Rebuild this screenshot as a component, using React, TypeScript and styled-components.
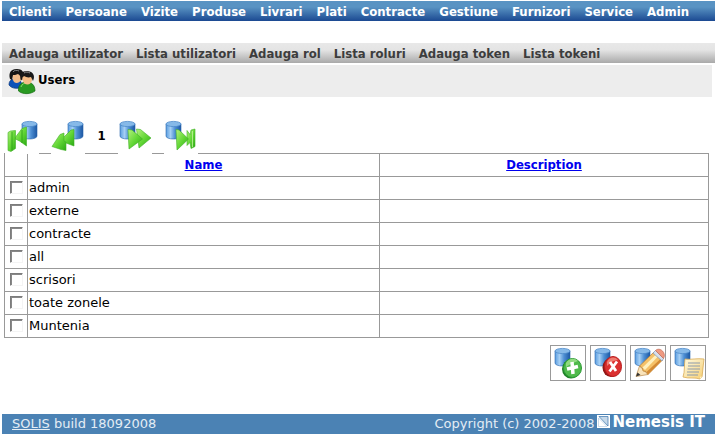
import React from 'react';
import styled, { createGlobalStyle, css } from 'styled-components';

const boldFace = css`
  font-family: "DejaVu Sans Condensed", "DejaVu Sans", Verdana, sans-serif;
  font-size: 13px;
  font-weight: bold;
`;

const GlobalStyle = createGlobalStyle`
  * { box-sizing: border-box; }
  body {
    margin: 1px 1px 2px 2px;
    background: #fff;
    color: #000;
    font: 13px/20px "DejaVu Sans", Verdana, sans-serif;
  }
`;

const MenuBar = styled.nav<{ $tone: 'blue' | 'grey' }>`
  ${boldFace}
  display: flex;
  height: 20px;
  padding: 0 7px;
  overflow: hidden;
  white-space: nowrap;
  ${({ $tone }) =>
    $tone === 'blue'
      ? css`
          gap: 14px;
          color: #fff;
          background: linear-gradient(#5993c3 0%, #5993c3 30%, #1b4992 100%);
        `
      : css`
          gap: 13px;
          margin-top: 22px;
          color: #3d3d3d;
          background: linear-gradient(#e8e8e8 0%, #e4e4e4 35%, #a9a9a9 100%);
        `}
`;

const MenuLink = styled.a`
  color: inherit;
  text-decoration: none;
  line-height: 22px;
`;

const TitleBar = styled.header`
  display: flex;
  align-items: center;
  gap: 2px;
  height: 32px;
  margin: 2px 3px 0 0;
  padding-left: 6px;
  background: #ededed;
`;

const Title = styled.h1`
  ${boldFace}
  margin: 0;
  padding-bottom: 2px;
`;

const Pager = styled.div`
  position: relative;
  display: flex;
  align-items: center;
  gap: 12px;
  margin: 23px 0 -1px 3px;
`;

const IconButton = styled.button`
  padding: 0;
  border: 0;
  background: #fff;
  cursor: pointer;
  svg { display: block; }
`;

const PageNumber = styled.span`
  ${boldFace}
  width: 9px;
  padding-bottom: 2px;
  text-align: center;
`;

const Content = styled.main`
  margin: 0 6px 0 2px;
`;

const Table = styled.table`
  width: 100%;
  border-collapse: collapse;
  table-layout: fixed;
`;

const SelectColumn = styled.col`
  width: 23px;
`;

const NameColumn = styled.col`
  width: 50%;
`;

const Cell = styled.td`
  height: 23px;
  padding: 1px;
  border: 1px solid #999;
  line-height: 20px;
`;

const HeadCell = styled(Cell).attrs({ as: 'th' })`
  ${boldFace}
  text-align: center;
`;

const SortLink = styled.a`
  color: #00e;
  text-decoration: underline;
`;

const Tick = styled.input`
  display: block;
  appearance: none;
  width: 13px;
  height: 13px;
  margin: 0 0 2px 4px;
  border: 1px solid;
  border-color: #7c7c7c #f4f4f4 #f4f4f4 #7c7c7c;
  background: #fff;
  box-shadow: inset 1px 1px #888;
`;

const Actions = styled.div`
  display: flex;
  justify-content: flex-end;
  gap: 4px;
  margin: 7px 3px 0 0;
`;

const ActionButton = styled(IconButton)`
  border: 1px solid #999;
`;

const Footer = styled.footer`
  display: flex;
  justify-content: space-between;
  height: 20px;
  margin-top: 33px;
  padding: 0 10px;
  background: #4b82b4;
  color: #e4edf5;
`;

const FooterLink = styled.a`
  color: inherit;
`;

const Copyright = styled.div`
  display: flex;
  gap: 3px;
`;

const Brand = styled.a`
  display: flex;
  gap: 2px;
  color: #fff;
  font-size: 15px;
  line-height: 16px;
  font-weight: bold;
  text-decoration: none;
`;

function Gradients({ id }: { id: string }) {
  return (
    <defs>
      <linearGradient id={`${id}-blue`}>
        <stop offset="0" stopColor="#5a9de0" />
        <stop offset=".3" stopColor="#a5cff4" />
        <stop offset=".6" stopColor="#4d8fd4" />
        <stop offset="1" stopColor="#1c57a3" />
      </linearGradient>
      <linearGradient id={`${id}-green`} x2="1" y2="1">
        <stop offset="0" stopColor="#b4f07e" />
        <stop offset=".5" stopColor="#66d838" />
        <stop offset="1" stopColor="#2aaa12" />
      </linearGradient>
      <linearGradient id={`${id}-paper`} x2="1" y2="1">
        <stop offset="0" stopColor="#fffbe2" />
        <stop offset="1" stopColor="#f6cf74" />
      </linearGradient>
    </defs>
  );
}

function Cylinder({ id, x, y }: { id: string; x: number; y: number }) {
  return (
    <g transform={`translate(${x} ${y})`}>
      <path d="M0 3v12c0 4 15 4 15 0V3z" fill={`url(#${id}-blue)`} stroke="#2865ab" strokeWidth=".6" />
      <ellipse cx="7.5" cy="3" rx="7.5" ry="2.6" fill="#86b9e8" stroke="#4f8ccb" strokeWidth=".8" />
    </g>
  );
}

type Step = 'first' | 'previous' | 'next' | 'last';

const arrows: Record<Step, string[]> = {
  first: ['M9.500 18.500 17 8.500l4.500-1.500v19l-7-5z', 'M3 12.500 5.500 11l5-.5v18L6 31.500 3 30.500z'],
  previous: ['M10 20 20 10l3-.5V26l-8-3z', 'M1 26.500 9 14.500l4-1.500v8l2 1v8.500l-5-1z'],
  next: ['M18.500 9l4 .5L33 18 21 28z', 'M10 9.500l4 .5L24.500 19 11 29z'],
  last: ['M23 10.500l3 4 1-4.500 4-1v17.500l-4 2-1-6-3 3z', 'M12 9.500l3 .5L24.500 19 13 30z'],
};

function PagerIcon({ step }: { step: Step }) {
  const back = step === 'first' || step === 'previous';
  return (
    <svg width="34" height="34" viewBox="0 0 34 34" aria-hidden="true">
      <Gradients id={step} />
      <Cylinder id={step} x={back ? 17 : 2} y={1} />
      {arrows[step].map((d) => (
        <path key={d} d={d} fill={`url(#${step}-green)`} stroke="#3fb026" strokeWidth=".6" strokeLinejoin="round" />
      ))}
      {step === 'first' && <path d="M7 12v18.500M17 10v13" stroke="#2a9c14" strokeWidth=".8" />}
      {step === 'last' && <path d="M28.500 11v16" stroke="#c3f3a0" strokeWidth=".8" />}
    </svg>
  );
}

type Action = 'add' | 'remove' | 'edit' | 'view';

function ActionIcon({ action }: { action: Action }) {
  return (
    <svg width="34" height="34" viewBox="0 0 34 34" aria-hidden="true">
      <Gradients id={action} />
      <Cylinder id={action} x={4} y={2} />
      {action === 'add' && (
        <>
          <ellipse cx="20" cy="23" rx="9" ry="9.500" fill="#1d7f25" />
          <ellipse cx="21.500" cy="22" rx="9" ry="9.500" fill="#4fba4b" stroke="#2c9a35" />
          <path d="M15 17c2-4 8-6 12-2-3 1-8 3-12 6z" fill="#90da80" />
          <path d="M21 16l1 12M16 23l11-2.500" stroke="#fff" strokeWidth="3.500" />
        </>
      )}
      {action === 'remove' && (
        <>
          <ellipse cx="20" cy="21.500" rx="8.500" ry="9.500" fill="#8f1715" />
          <ellipse cx="22" cy="20.500" rx="8.500" ry="10" fill="#db3030" stroke="#b71c1c" />
          <path d="M16 16c2-5 8-6 11-2-3 0-8 2-11 6z" fill="#ee7b70" />
          <path d="M19 16l6 9M26 15.500l-7.500 10" stroke="#fff" strokeWidth="2.800" />
        </>
      )}
      {action === 'edit' && (
        <>
          <path d="M5 30.500 8.500 20l8.500 8.500z" fill="#f9e3ba" stroke="#b98a4c" strokeWidth=".7" />
          <path d="M5 30.500l1.500-4 3 2.500z" fill="#333" />
          <path d="M8.500 20 23 6l8.500 8L17 28.500l-2-3-3-.5-.5-3z" fill="#f5c168" stroke="#b87b2c" strokeWidth=".7" />
          <path d="M11.500 21.500 25 8.500l2 2-13 13.500z" fill="#fff0bd" />
          <path d="M15.500 26 30 12.500l1.500 1.500L17 28.500z" fill="#d38a35" />
          <path d="M22 7l2.500-2.500 8 8L31 15z" fill="#d6e0ec" stroke="#8396b2" strokeWidth=".7" />
          <path d="M24.500 4.500c2-2 5-1.500 7 .5s2.500 5 1 7.500z" fill="#ef9a81" stroke="#c46a55" strokeWidth=".7" />
        </>
      )}
      {action === 'view' && (
        <>
          <path d="M14 13c6 1 12-1 19 0-1 6-1 12-2 18l-2 2c-5-2-11 0-17-2 2-6 1-12 2-18z" fill={`url(#${action}-paper)`} stroke="#d9ab55" strokeWidth=".8" />
          <path d="M29 33c0-2 0-3 2-2z" fill="#fff5cc" />
          <path d="M17 17h12M17 20h12M16.500 23H29M16 26h12M16 29h11" stroke="#8c9aab" />
        </>
      )}
    </svg>
  );
}

function UsersIcon() {
  return (
    <svg width="28" height="28" viewBox="0 0 28 28" aria-hidden="true">
      <path d="M1 18c0-4 2-6 6-6s7 2 7 8c-4 2-10 2-13-2z" fill="#0d52b8" stroke="#083478" strokeWidth=".7" />
      <path d="M4 7h9v6c-2 4-7 4-8 0z" fill="#f2bd8c" />
      <path d="M2 12C0 5 4 1.500 9 2c5 0 8 3 7 10l-3 1c0-3-1-5-3-6-2 1-4 1-5 1l-1 5z" fill="#161616" />
      <path d="M5 5c1-2 4-2 6-1" stroke="#858585" fill="none" />
      <path d="M10.500 24c-.5-6 3-9 8-9s8.500 3 8.500 9c-4 3-12 4-16.500 0z" fill="#2a9a22" stroke="#126b10" strokeWidth=".7" />
      <path d="M13 20c1-3 3-4 6-4" stroke="#84d869" fill="none" />
      <path d="M14 9h10v4c-1 6-8 6-9.500 0z" fill="#f5bd87" />
      <path d="M13 14c-2-7 1-10 6-10s9 4 6 10l-2-4c-3 1-5 0-7-1l-2 2z" fill="#191919" />
      <path d="M16 6c2-1.500 4-1 6 0" stroke="#909090" fill="none" />
    </svg>
  );
}

function BrandMark() {
  return (
    <svg width="13" height="14" viewBox="0 0 13 14" aria-hidden="true">
      <path d="M0 1h13v13H0z" fill="#fff" />
      <path d="M2 2.500h9V12z" fill="#c5d8e9" stroke="#4b82b4" strokeWidth=".8" />
      <path d="M1.500 4v8.500H10z" fill="#fff" stroke="#a9c5de" strokeWidth=".6" />
    </svg>
  );
}

const menu = ['Clienti', 'Persoane', 'Vizite', 'Produse', 'Livrari', 'Plati', 'Contracte', 'Gestiune', 'Furnizori', 'Service', 'Admin'];
const submenu = ['Adauga utilizator', 'Lista utilizatori', 'Adauga rol', 'Lista roluri', 'Adauga token', 'Lista tokeni'];
const users = ['admin', 'externe', 'contracte', 'all', 'scrisori', 'toate zonele', 'Muntenia'];
const actions: Action[] = ['add', 'remove', 'edit', 'view'];

export default function App() {
  return (
    <>
      <GlobalStyle />
      <MenuBar $tone="blue" aria-label="Main">
        {menu.map((item) => <MenuLink href="#" key={item}>{item}</MenuLink>)}
      </MenuBar>
      <MenuBar $tone="grey" aria-label="Section">
        {submenu.map((item) => <MenuLink href="#" key={item}>{item}</MenuLink>)}
      </MenuBar>
      <TitleBar>
        <UsersIcon />
        <Title>Users</Title>
      </TitleBar>
      <Pager>
        <IconButton aria-label="First page"><PagerIcon step="first" /></IconButton>
        <IconButton aria-label="Previous page"><PagerIcon step="previous" /></IconButton>
        <PageNumber>1</PageNumber>
        <IconButton aria-label="Next page"><PagerIcon step="next" /></IconButton>
        <IconButton aria-label="Last page"><PagerIcon step="last" /></IconButton>
      </Pager>
      <Content>
        <Table>
          <colgroup>
            <SelectColumn />
            <NameColumn />
            <col />
          </colgroup>
          <thead>
            <tr>
              <HeadCell />
              <HeadCell><SortLink href="#">Name</SortLink></HeadCell>
              <HeadCell><SortLink href="#">Description</SortLink></HeadCell>
            </tr>
          </thead>
          <tbody>
            {users.map((user) => (
              <tr key={user}>
                <Cell><Tick type="checkbox" id={user} /></Cell>
                <Cell><label htmlFor={user}>{user}</label></Cell>
                <Cell />
              </tr>
            ))}
          </tbody>
        </Table>
        <Actions>
          {actions.map((action) => (
            <ActionButton key={action} aria-label={action}>
              <ActionIcon action={action} />
            </ActionButton>
          ))}
        </Actions>
      </Content>
      <Footer>
        <span><FooterLink href="#">SOLIS</FooterLink> build 18092008</span>
        <Copyright>
          Copyright (c) 2002-2008
          <Brand href="#"><BrandMark />Nemesis IT</Brand>
        </Copyright>
      </Footer>
    </>
  );
}
